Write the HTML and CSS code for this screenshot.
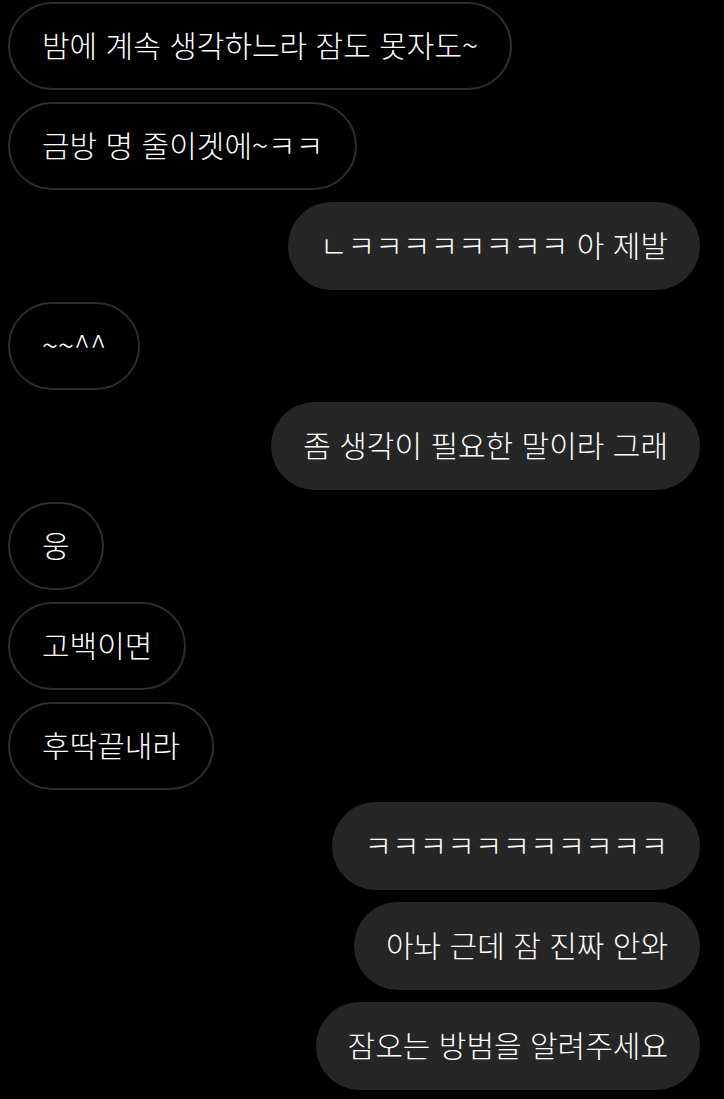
FILE: index.html
```html
<!DOCTYPE html>
<html lang="ko">
<head>
<meta charset="utf-8">
<link rel="stylesheet" href="styles.css">
</head>
<body>
<div class="chat">
  <div class="bubble in">밤에 계속 생각하느라 잠도 못자도~</div>
  <div class="bubble in">금방 명 줄이겟에~ㅋㅋ</div>
  <div class="bubble out">ㄴㅋㅋㅋㅋㅋㅋㅋㅋ 아 제발</div>
  <div class="bubble in">~~^^</div>
  <div class="bubble out">좀 생각이 필요한 말이라 그래</div>
  <div class="bubble in">웅</div>
  <div class="bubble in">고백이면</div>
  <div class="bubble in">후딱끝내라</div>
  <div class="bubble out">ㅋㅋㅋㅋㅋㅋㅋㅋㅋㅋㅋ</div>
  <div class="bubble out">아놔 근데 잠 진짜 안와</div>
  <div class="bubble out">잠오는 방범을 알려주세요</div>
</div>
</body>
</html>
```
FILE: styles.css
```css
html, body {
  margin: 0;
  padding: 0;
  background: #000;
}
body {
  font-family: "Noto Sans CJK KR", "Noto Sans", sans-serif;
  color: #fff;
}
.chat {
  display: flex;
  flex-direction: column;
  gap: 12px;
  padding-top: 2px;
}
.bubble {
  box-sizing: border-box;
  height: 88px;
  border-radius: 44px;
  padding: 0 32px 4px;
  display: flex;
  align-items: center;
  font-size: 30px;
  font-weight: 300;
  line-height: 1;
  white-space: nowrap;
}
.in {
  align-self: flex-start;
  margin-left: 8px;
  border: 2px solid #2e2e2e;
  background: #000;
}
.out {
  align-self: flex-end;
  margin-right: 24px;
  background: #262626;
}
```
